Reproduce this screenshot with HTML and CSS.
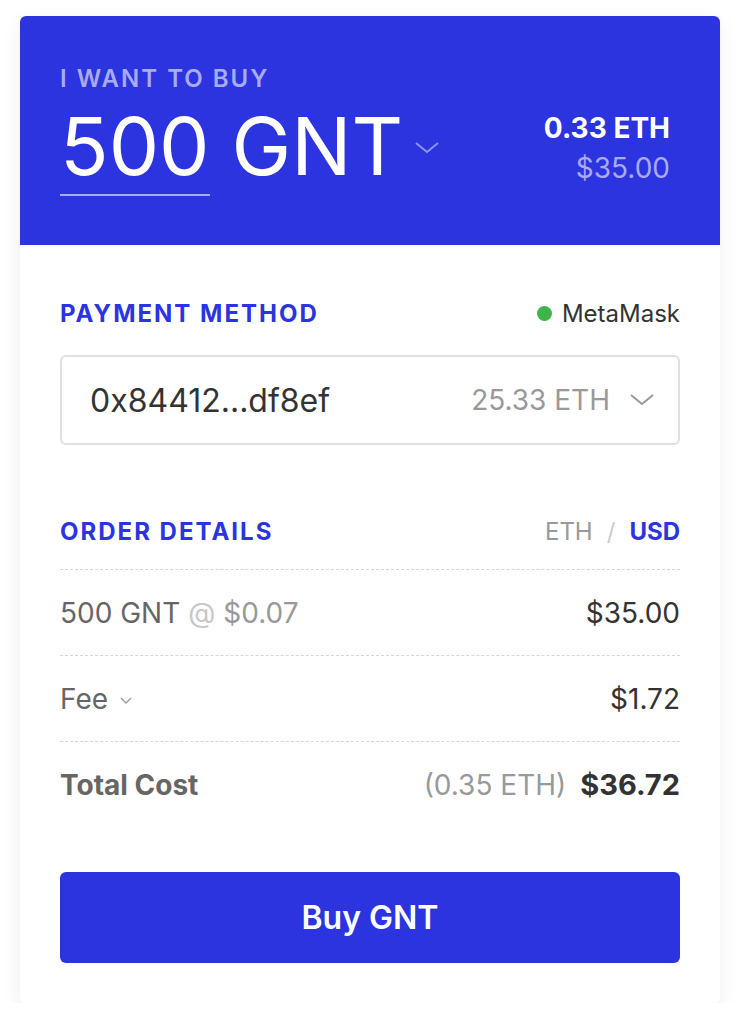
FILE: index.html
```html
<!DOCTYPE html>
<html>
<head>
<meta charset="utf-8">
<link rel="stylesheet" href="styles.css">
</head>
<body>
<div class="card">
  <div class="header">
    <div class="label">I WANT TO BUY</div>
    <div class="amount-row">
      <div class="amount">
        <span class="qty">500</span>
        <span class="token">GNT</span>
        <svg class="hchev" width="24" height="12" viewBox="0 0 24 12"><path d="M1 1 L12 10 L23 1" fill="none" stroke="#8e93ee" stroke-width="2"/></svg>
      </div>
      <div class="price">
        <div class="eth">0.33 ETH</div>
        <div class="usd">$35.00</div>
      </div>
    </div>
  </div>
  <div class="body">
    <div class="sec-head pm-head">
      <div class="sec-title">PAYMENT METHOD</div>
      <div class="wallet"><span class="dot"></span>MetaMask</div>
    </div>
    <div class="select">
      <span class="addr">0x84412...df8ef</span>
      <span class="bal">25.33 ETH</span>
      <svg class="schev" width="24" height="12" viewBox="0 0 24 12"><path d="M1 1 L12 10 L23 1" fill="none" stroke="#999" stroke-width="2"/></svg>
    </div>
    <div class="sec-head od-head">
      <div class="sec-title">ORDER DETAILS</div>
      <div class="toggle"><span class="off">ETH</span><span class="slash">/</span><span class="on">USD</span></div>
    </div>
    <div class="rows">
      <div class="row">
        <div class="rl"><span class="c6">500 GNT</span> <span class="at">@</span> <span class="c9">$0.07</span></div>
        <div class="rv">$35.00</div>
      </div>
      <div class="row">
        <div class="rl"><span class="c6">Fee</span><svg class="fchev" width="12" height="7" viewBox="0 0 12 7"><path d="M1 1 L6 6 L11 1" fill="none" stroke="#999" stroke-width="1.3"/></svg></div>
        <div class="rv">$1.72</div>
      </div>
      <div class="row total">
        <div class="rl"><span class="tl">Total Cost</span></div>
        <div class="rv"><span class="c9 teth">(0.35 ETH)</span><span class="tv">$36.72</span></div>
      </div>
    </div>
    <button class="buy">Buy GNT</button>
  </div>
</div>
</body>
</html>
```
FILE: styles.css
```css
* { box-sizing: border-box; }
html, body { margin: 0; padding: 0; background: #ffffff; }
body { font-family: Inter, "Noto Sans", sans-serif; }

.card {
  width: 700px;
  margin: 16px auto 0;
  background: #fff;
  border-radius: 6px;
  overflow: hidden;
  box-shadow: 0 6px 20px rgba(0,0,0,0.07);
}

.header {
  background: #2c34e0;
  padding: 48px 50px 49px 40px;
  color: #fff;
}
.label {
  font-size: 24px;
  line-height: 30px;
  font-weight: 600;
  letter-spacing: 2px;
  color: #a7abf2;
}
.amount-row {
  margin-top: 12px;
  display: flex;
  justify-content: space-between;
  align-items: flex-start;
}
.amount {
  display: flex;
  align-items: flex-start;
  font-size: 80px;
  line-height: 80px;
  font-weight: 400;
}
.qty {
  display: inline-block;
  padding-bottom: 8px;
  border-bottom: 2px solid #a7abf2;
}
.token { margin-left: 22px; }
.hchev { margin-left: 12px; margin-top: 36px; }
.price { text-align: right; margin-top: 2px; }
.eth { font-size: 28px; font-weight: 700; line-height: 40px; }
.usd { font-size: 28px; font-weight: 400; line-height: 40px; color: #a7abf2; }

.body { padding: 53px 40px 40px; }
.sec-head {
  display: flex;
  justify-content: space-between;
  align-items: center;
  height: 30px;
}
.sec-title {
  font-size: 24px;
  font-weight: 700;
  letter-spacing: 2px;
  color: #2c34e0;
}
.wallet {
  display: flex;
  align-items: center;
  font-size: 24px;
  color: #333;
}
.dot {
  width: 15px; height: 15px;
  border-radius: 50%;
  background: #3db54a;
  margin-right: 10px;
}
.select {
  margin-top: 27px;
  height: 90px;
  border: 2px solid #e0e0e0;
  border-radius: 6px;
  display: flex;
  align-items: center;
  padding: 0 24px 0 28px;
}
.addr { font-size: 32px; color: #333; flex: 1; }
.bal { font-size: 28px; color: #999; }
.schev { margin-left: 20px; }

.od-head { margin-top: 71px; }
.toggle { font-size: 24px; display: flex; align-items: center; }
.toggle .off { color: #999; }
.toggle .slash { color: #ccc; margin: 0 14px; }
.toggle .on { color: #2c34e0; font-weight: 700; }

.rows { margin-top: 23px; }
.row {
  height: 86px;
  border-top: 1px dashed #d6d6d6;
  display: flex;
  justify-content: space-between;
  align-items: center;
  font-size: 28px;
}
.rl { display: flex; align-items: center; }
.c6 { color: #666; }
.c9 { color: #999; }
.at { color: #c8c8c8; margin: 0 8px; }
.rv { color: #333; display: flex; align-items: center; }
.fchev { margin-left: 12px; margin-top: 4px; }
.tl { font-weight: 700; color: #666; }
.teth { margin-right: 14px; }
.tv { font-weight: 700; color: #333; font-size: 29px; }

.buy {
  display: block;
  width: 100%;
  margin-top: 45px;
  height: 91px;
  border: 0;
  border-radius: 6px;
  background: #2c34e0;
  color: #fff;
  font-family: Inter, sans-serif;
  font-size: 32px;
  font-weight: 600;
}
```
